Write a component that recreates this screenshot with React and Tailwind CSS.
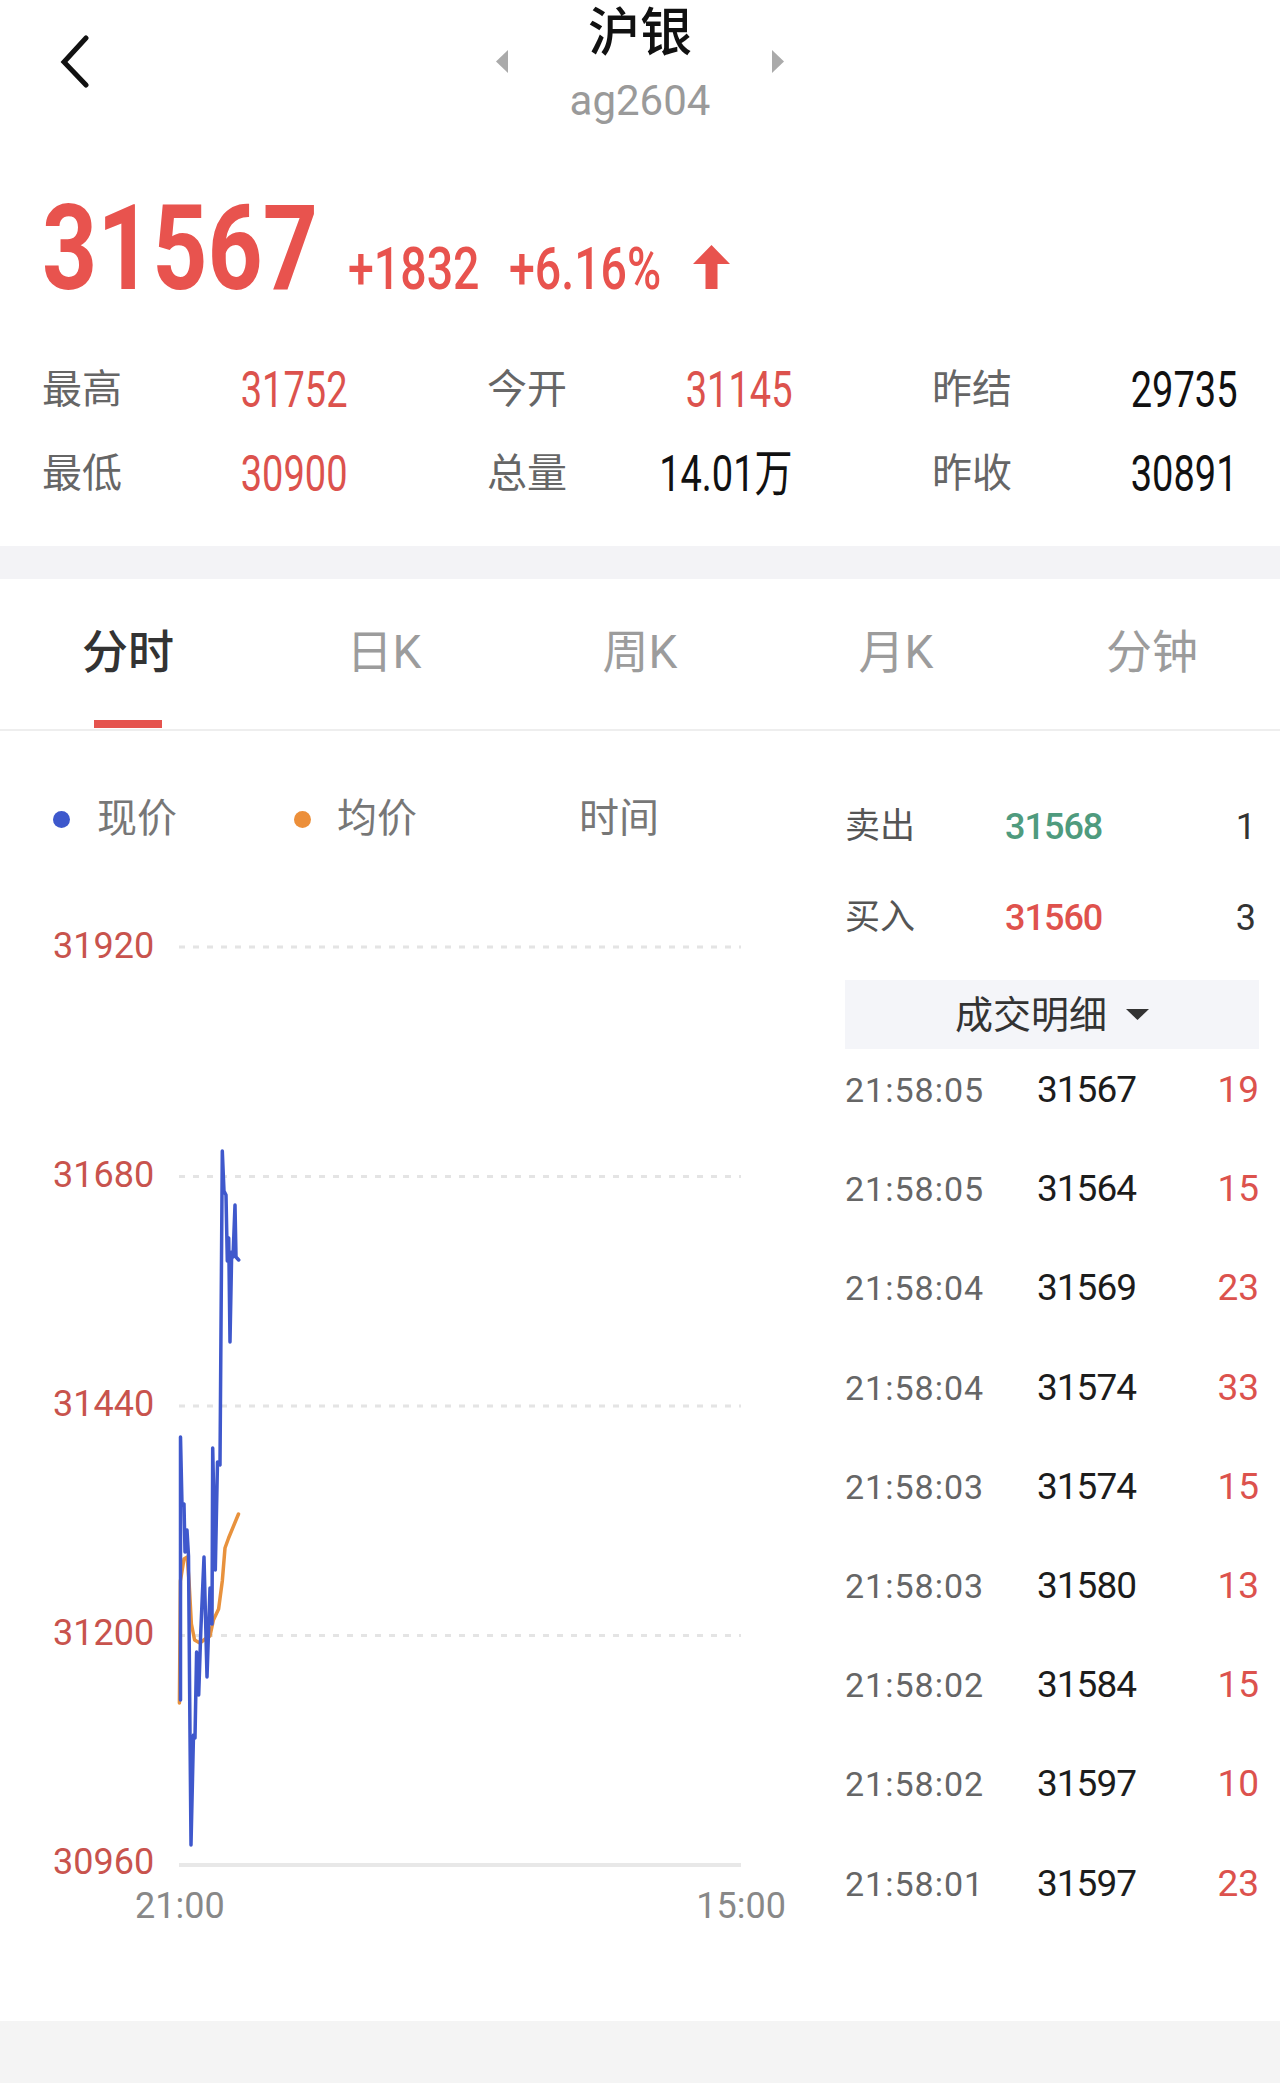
import React from "react";

// price -> local chart coords are pre-traced from the intraday session
const bluePts = [
  [1.5, 774], [1.5, 511], [3, 579], [5, 578], [6, 626], [8, 604], [9.5, 630],
  [11, 809], [12, 919], [14.5, 809], [16, 812], [17.6, 726], [19.7, 769],
  [21.8, 705], [25, 631], [28, 751], [31, 662], [33, 698], [33.7, 522],
  [36.3, 644], [38.5, 536], [41, 539], [43.3, 225], [45, 265], [47, 269],
  [48.3, 335], [49.7, 312], [51, 416], [52.7, 326], [54, 331], [56, 279],
  [57, 331], [59.7, 334],
];

const avgPts = [
  [0.4, 777], [1.4, 655], [5, 633], [8.2, 631], [10, 655], [12.4, 698],
  [15.6, 714], [20.8, 717], [27.6, 712], [31, 710], [34.4, 694], [39.6, 683],
  [43.3, 655], [46, 622], [49.6, 612], [59.5, 588],
];

const toPoints = (pts) => pts.map(([x, y]) => `${x},${y}`).join(" ");

const stats = [
  { label: "最高", value: "31752", color: "text-[#dc524d]" },
  { label: "今开", value: "31145", color: "text-[#dc524d]" },
  { label: "昨结", value: "29735", color: "text-[#111]" },
  { label: "最低", value: "30900", color: "text-[#dc524d]" },
  { label: "总量", value: "14.01万", color: "text-[#111]" },
  { label: "昨收", value: "30891", color: "text-[#111]" },
];

const tabs = ["分时", "日K", "周K", "月K", "分钟"];

const trades = [
  ["21:58:05", "31567", "19"],
  ["21:58:05", "31564", "15"],
  ["21:58:04", "31569", "23"],
  ["21:58:04", "31574", "33"],
  ["21:58:03", "31574", "15"],
  ["21:58:03", "31580", "13"],
  ["21:58:02", "31584", "15"],
  ["21:58:02", "31597", "10"],
  ["21:58:01", "31597", "23"],
];

function Header() {
  return (
    <div className="grid grid-cols-[1fr_auto_1fr] h-[140px]">
      <div className="pl-[58px] pt-[35px]">
        <svg width="34" height="54" viewBox="0 0 34 54">
          <path d="M28 3 L6 27 L28 50" fill="none" stroke="#111" strokeWidth="5" strokeLinecap="round" strokeLinejoin="miter" />
        </svg>
      </div>
      <div className="flex items-start gap-[62px]">
        <svg width="12" height="23" viewBox="0 0 12 23" className="mt-[50px]">
          <polygon points="12,0 12,23 0,11.5" fill="#aaaaaa" />
        </svg>
        <div className="flex flex-col items-center pt-[8px]">
          <div className="text-[52px] leading-[52px] font-medium text-[#111]">沪银</div>
          <div className="mt-[20px] text-[42px] leading-none text-[#9a9a9a]">ag2604</div>
        </div>
        <svg width="12" height="23" viewBox="0 0 12 23" className="mt-[50px]">
          <polygon points="0,0 0,23 12,11.5" fill="#aaaaaa" />
        </svg>
      </div>
      <div />
    </div>
  );
}

function PriceBlock() {
  return (
    <div className="h-[208px] pt-[50px] pl-[42px] flex items-baseline text-[#e8534e]">
      <div className="w-[306px] shrink-0 text-[118px] leading-none font-bold">
        <span className="inline-block origin-left scale-x-[0.815]">31567</span>
      </div>
      <div className="w-[161px] shrink-0 text-[60px] leading-none font-medium">
        <span className="inline-block origin-left scale-x-[0.775]">+1832</span>
      </div>
      <div className="w-[184px] shrink-0 text-[60px] leading-none font-medium">
        <span className="inline-block origin-left scale-x-[0.775]">+6.16%</span>
      </div>
      <svg width="37" height="44" viewBox="0 0 37 44" className="mb-[3px]">
        <polygon points="0,19 18.5,0 37,19 24.5,19 24.5,44 12.5,44 12.5,19" fill="#e8534e" />
      </svg>
    </div>
  );
}

function Stats() {
  return (
    <div className="h-[198px]">
      <div className="grid grid-cols-3 gap-x-[139px] px-[42px]">
        {stats.map((s) => (
          <div key={s.label} className="flex justify-between items-center h-[84px]">
            <span className="text-[40px] leading-none text-[#666]">{s.label}</span>
            <span className={`inline-block origin-right scale-x-[0.76] text-[50px] leading-none ${s.color}`}>
              {s.value}
            </span>
          </div>
        ))}
      </div>
    </div>
  );
}

function Tabs() {
  return (
    <div className="grid grid-cols-5 h-[152px] border-b-2 border-[#eeeeee]">
      {tabs.map((t, i) => (
        <div key={t} className="flex flex-col items-center pt-[43px]">
          <span className={`text-[46px] leading-[60px] ${i === 0 ? "text-[#333] font-medium" : "text-[#9c9c9c]"}`}>{t}</span>
          {i === 0 && <div className="mt-auto mb-[1px] w-[68px] h-[8px] bg-[#e5534e]" />}
        </div>
      ))}
    </div>
  );
}

function ChartPanel() {
  const grid = [21, 250.5, 480, 709.5];
  return (
    <div className="w-[845px] shrink-0 pl-[53px] pt-[64px]">
      {/* legend */}
      <div className="flex items-center h-[48px] text-[40px] leading-none text-[#777]">
        <div className="w-[241px] flex items-center gap-[27px]">
          <span className="w-[17px] h-[17px] rounded-full bg-[#3d58cc]" />
          现价
        </div>
        <div className="w-[285px] flex items-center gap-[26px]">
          <span className="w-[17px] h-[17px] rounded-full bg-[#ec8f3a]" />
          均价
        </div>
        <span>时间</span>
      </div>

      <div className="flex mt-[83px]">
        <div className="w-[126px] h-[956px] flex flex-col justify-between text-[36px] leading-[40px] text-[#c8534d]">
          <span>31920</span>
          <span>31680</span>
          <span>31440</span>
          <span>31200</span>
          <span>30960</span>
        </div>
        <svg width="562" height="956" viewBox="0 0 562 956" className="overflow-visible">
          {grid.map((y) => (
            <line key={y} x1="0" y1={y} x2="562" y2={y} stroke="#e4e4e4" strokeWidth="3" strokeDasharray="6 8" />
          ))}
          <line x1="0" y1="939" x2="562" y2="939" stroke="#e8e8e8" strokeWidth="4" />
          <polyline points={toPoints(avgPts)} fill="none" stroke="#e8923d" strokeWidth="3.5" strokeLinejoin="round" strokeLinecap="round" />
          <polyline points={toPoints(bluePts)} fill="none" stroke="#3f58cc" strokeWidth="3.5" strokeLinejoin="round" strokeLinecap="round" />
        </svg>
      </div>

      <div className="ml-[82px] w-[651px] mt-[4px] flex justify-between text-[36px] leading-[40px] text-[#888]">
        <span>21:00</span>
        <span>15:00</span>
      </div>
    </div>
  );
}

function QuoteRow({ label, value, color, count }) {
  return (
    <div className="flex items-center h-[91px]">
      <span className="w-[160px] text-[35px] leading-none text-[#555]">{label}</span>
      <span className={`text-[36px] leading-none font-medium tracking-[-1px] ${color}`}>{value}</span>
      <span className="ml-auto pr-[3px] text-[36px] leading-none text-[#333]">{count}</span>
    </div>
  );
}

function TradePanel() {
  return (
    <div className="w-[414px] shrink-0 pt-[50px]">
      <QuoteRow label="卖出" value="31568" color="text-[#4f9b7e]" count="1" />
      <QuoteRow label="买入" value="31560" color="text-[#df524d]" count="3" />
      <div className="mt-[17px] h-[69px] bg-[#f4f5f9] flex items-center justify-center gap-[19px]">
        <span className="text-[38px] leading-none text-[#333]">成交明细</span>
        <svg width="23" height="11" viewBox="0 0 23 11">
          <polygon points="0,0 23,0 11.5,11" fill="#333" />
        </svg>
      </div>
      {trades.map(([time, price, vol], i) => (
        <div key={i} className="flex h-[99.2px] pt-[21px] leading-[40px]">
          <span className="w-[192px] text-[34px] tracking-[1px] text-[#666]">{time}</span>
          <span className="text-[37px] tracking-[-1px] text-[#1c1c1c]">{price}</span>
          <span className="ml-auto text-[37px] text-[#dc524d]">{vol}</span>
        </div>
      ))}
    </div>
  );
}

export default function App() {
  return (
    <div className="w-[1280px] min-h-[2083px] bg-white font-['Roboto','Noto_Sans_CJK_SC',sans-serif] text-[#222]">
      <Header />
      <PriceBlock />
      <Stats />
      <div className="h-[33px] bg-[#f3f3f6]" />
      <Tabs />
      <div className="flex h-[1290px]">
        <ChartPanel />
        <TradePanel />
      </div>
      <div className="h-[62px] bg-[#f4f4f4]" />
    </div>
  );
}
